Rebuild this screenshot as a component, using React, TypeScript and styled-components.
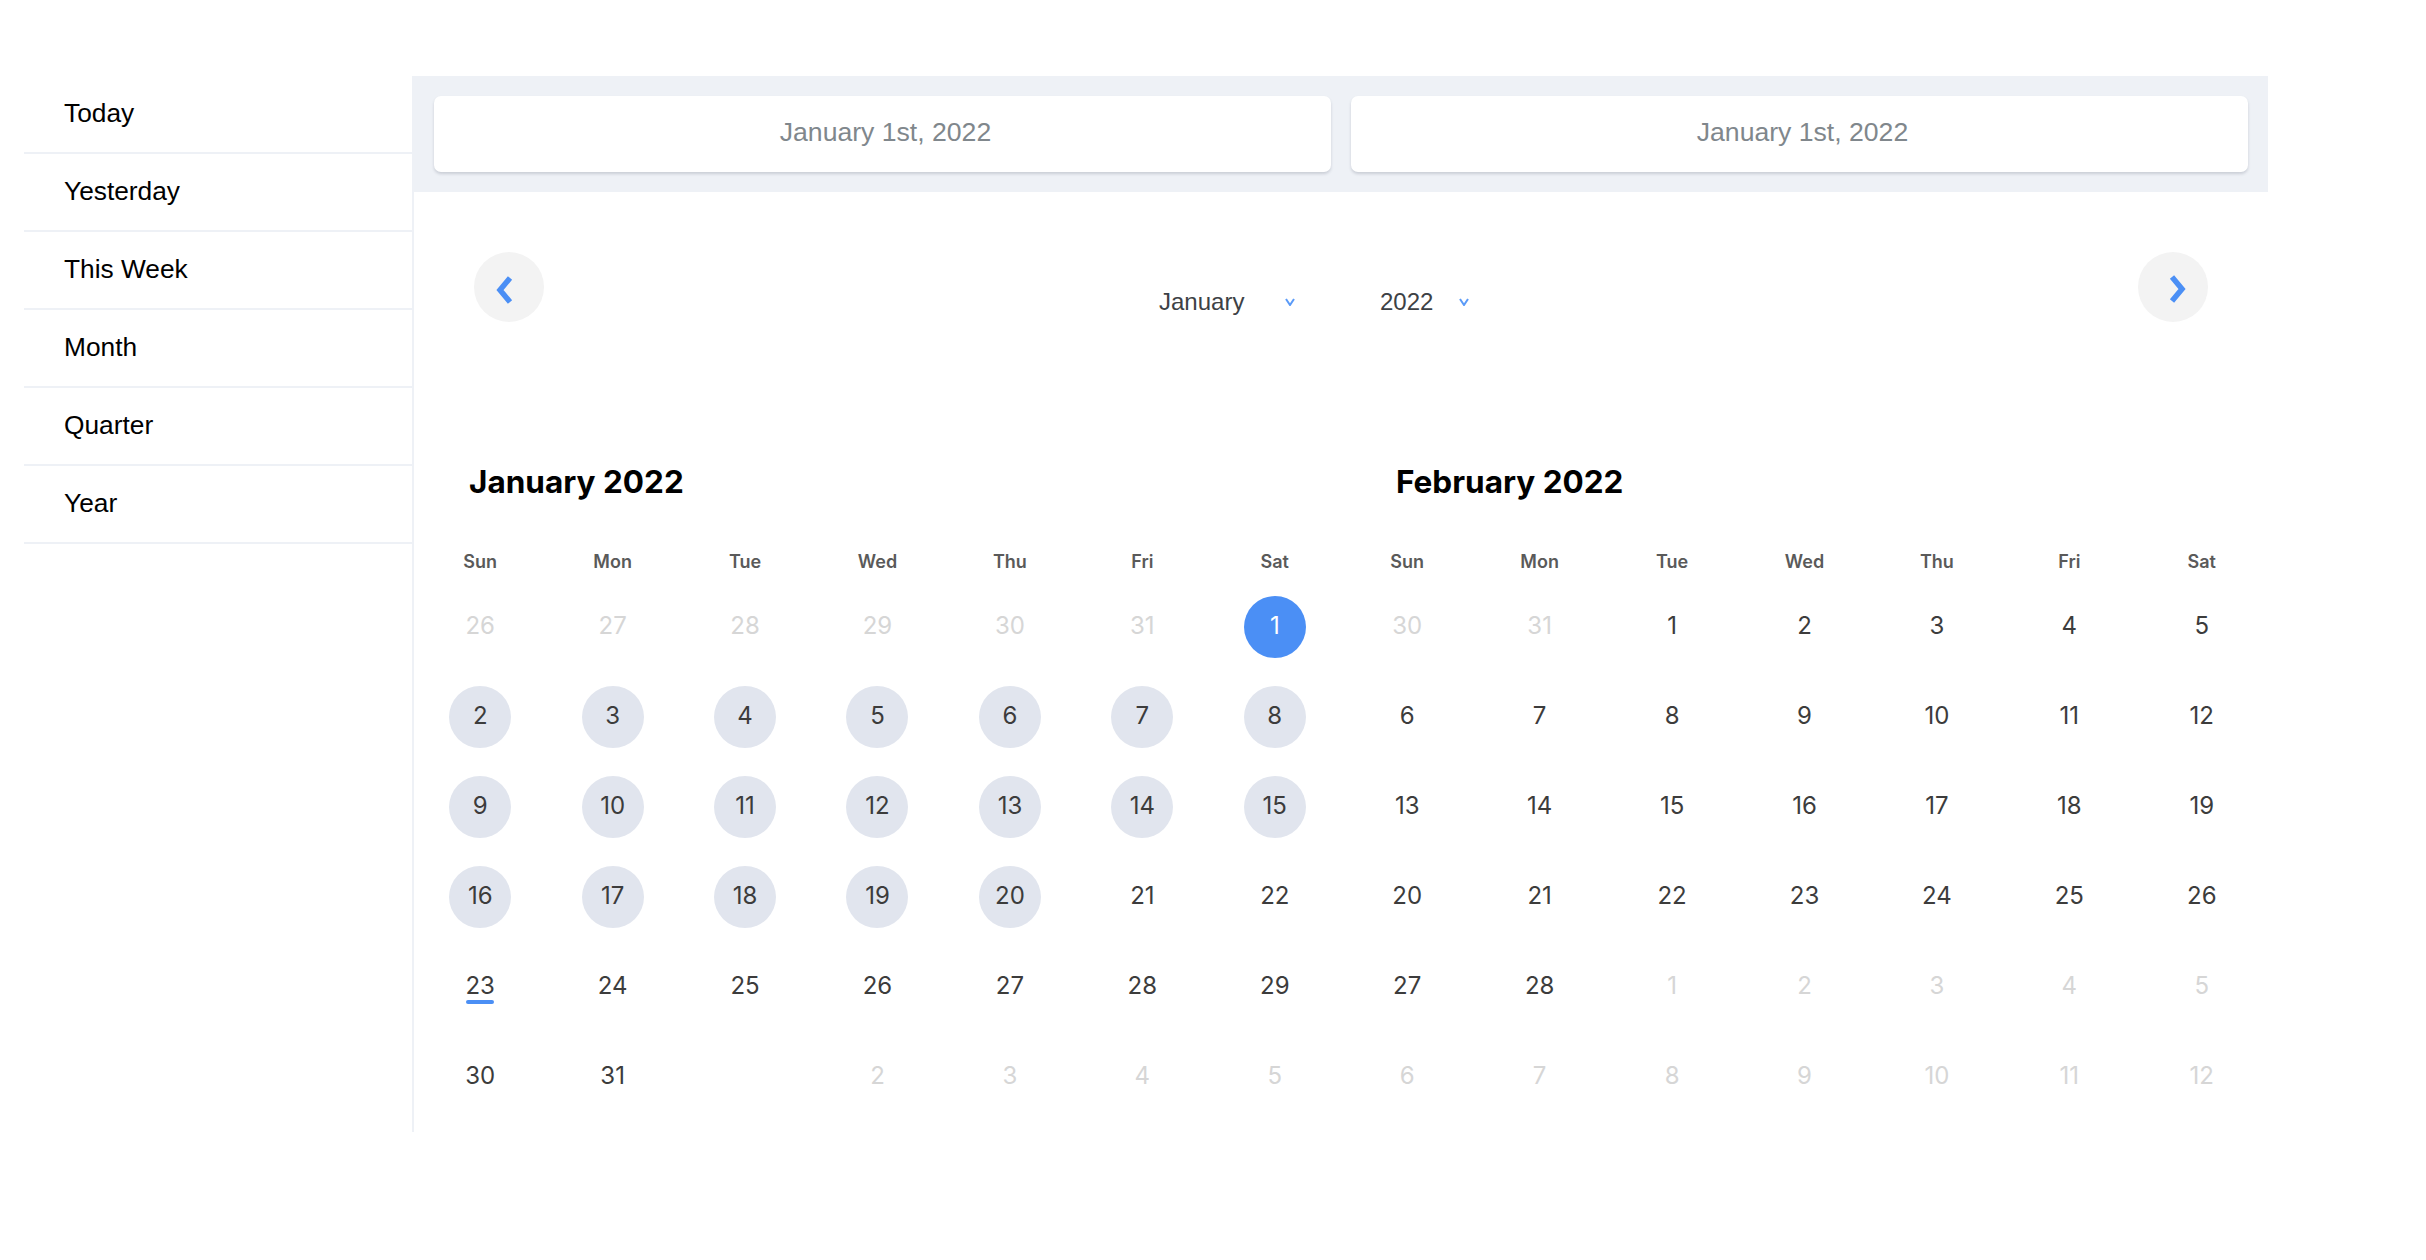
import React from 'react';
import styled, { createGlobalStyle } from 'styled-components';

const GlobalStyle = createGlobalStyle`
  html, body {
    margin: 0;
    padding: 0;
    background: #ffffff;
  }
  * {
    box-sizing: border-box;
  }
`;

const PANEL_GRAY = '#eef1f6';
const BLUE = '#4b8ff5';

type DayKind = 'in' | 'out' | 'blank';
type DayState = 'none' | 'start' | 'range' | 'today';

interface Day {
  n: number | null;
  kind: DayKind;
  state: DayState;
}

interface MonthData {
  title: string;
  weeks: Day[][];
}

const out = (n: number): Day => ({ n, kind: 'out', state: 'none' });
const day = (n: number, state: DayState = 'none'): Day => ({ n, kind: 'in', state });
const blank: Day = { n: null, kind: 'blank', state: 'none' };

const range = (from: number, to: number, make: (n: number) => Day) =>
  Array.from({ length: to - from + 1 }, (_, i) => make(from + i));

const january: MonthData = {
  title: 'January 2022',
  weeks: [
    [...range(26, 31, out), day(1, 'start')],
    range(2, 8, (n) => day(n, 'range')),
    range(9, 15, (n) => day(n, 'range')),
    [...range(16, 20, (n) => day(n, 'range')), day(21), day(22)],
    [day(23, 'today'), ...range(24, 29, (n) => day(n))],
    [day(30), day(31), blank, ...range(2, 5, out)],
  ],
};

const february: MonthData = {
  title: 'February 2022',
  weeks: [
    [out(30), out(31), ...range(1, 5, (n) => day(n))],
    range(6, 12, (n) => day(n)),
    range(13, 19, (n) => day(n)),
    range(20, 26, (n) => day(n)),
    [day(27), day(28), ...range(1, 5, out)],
    range(6, 12, out),
  ],
};

const presets = ['Today', 'Yesterday', 'This Week', 'Month', 'Quarter', 'Year'];
const weekdays = ['Sun', 'Mon', 'Tue', 'Wed', 'Thu', 'Fri', 'Sat'];

const Page = styled.div`
  display: flex;
  align-items: flex-start;
  padding: 76px 0 0 24px;
`;

const Sidebar = styled.nav`
  width: 388px;
  display: flex;
  flex-direction: column;
`;

const PresetItem = styled.div`
  height: 78px;
  display: flex;
  align-items: center;
  padding: 0 0 2px 40px;
  border-bottom: 2px solid ${PANEL_GRAY};
  font-family: 'Liberation Sans', Arial, sans-serif;
  font-size: 26.3px;
  color: #000;
  cursor: pointer;
`;

const Main = styled.section`
  width: 1856px;
  border-left: 2px solid ${PANEL_GRAY};
  padding-bottom: 10px;
`;

const InputsBar = styled.div`
  display: grid;
  grid-template-columns: 1fr 1fr;
  gap: 20px;
  padding: 20px;
  background: ${PANEL_GRAY};
`;

const DateInput = styled.div`
  height: 76px;
  display: flex;
  align-items: center;
  justify-content: center;
  padding: 0 0 3px 6px;
  background: #fff;
  border-radius: 7px;
  box-shadow: 0 2px 3px rgba(60, 70, 90, 0.2);
  font-family: 'Liberation Sans', Arial, sans-serif;
  font-size: 26.6px;
  color: #80878c;
`;

const NavRow = styled.div`
  display: flex;
  align-items: flex-start;
  padding: 60px 60px 0;
`;

const NavButton = styled.button<{ $dir: 'prev' | 'next' }>`
  width: 70px;
  height: 70px;
  flex: none;
  border: none;
  border-radius: 50%;
  background: #f3f3f3;
  display: flex;
  align-items: center;
  justify-content: center;
  padding: ${({ $dir }) => ($dir === 'prev' ? '6px 9px 0 0' : '4px 0 0 8px')};
  cursor: pointer;
`;

const Pickers = styled.div`
  flex: 1;
  display: flex;
  justify-content: center;
  gap: 85px;
  margin-top: 35px;
  padding-right: 54px;
`;

const Select = styled.div<{ $width: number }>`
  width: ${({ $width }) => $width}px;
  height: 30px;
  display: flex;
  align-items: center;
  justify-content: space-between;
  font-family: 'Liberation Sans', Arial, sans-serif;
  font-size: 24px;
  color: #3d4145;
  cursor: pointer;
`;

const Months = styled.div`
  display: grid;
  grid-template-columns: 1fr 1fr;
  margin-top: 142px;
`;

const MonthTitle = styled.h2`
  margin: 0 0 40px;
  padding-left: 55px;
  font-family: Inter, 'Liberation Sans', sans-serif;
  font-size: 31.5px;
  line-height: 36px;
  font-weight: 700;
  color: #000;
`;

const DayGrid = styled.div`
  display: grid;
  grid-template-columns: repeat(7, 1fr);
  grid-template-rows: 42px;
  grid-auto-rows: 90px;
`;

const WeekdayCell = styled.div`
  display: flex;
  align-items: center;
  justify-content: center;
  font-family: Inter, 'Liberation Sans', sans-serif;
  font-size: 18px;
  font-weight: 600;
  color: #5a5a5a;
`;

const DayCell = styled.div`
  display: flex;
  align-items: center;
  justify-content: center;
`;

const DayCircle = styled.div<{ $kind: DayKind; $state: DayState }>`
  position: relative;
  width: 62px;
  height: 62px;
  border-radius: 50%;
  display: flex;
  align-items: center;
  justify-content: center;
  padding-bottom: 3px;
  font-family: Inter, 'Liberation Sans', sans-serif;
  font-size: 24px;
  line-height: 24px;
  color: ${({ $kind, $state }) =>
    $state === 'start' ? '#fff' : $kind === 'out' ? '#d6d6d6' : '#3c3c3c'};
  background: ${({ $state }) =>
    $state === 'start' ? BLUE : $state === 'range' ? '#e1e5ee' : 'transparent'};
`;

const TodayMark = styled.span`
  position: relative;

  &::after {
    content: '';
    position: absolute;
    left: 50%;
    top: calc(100% + 2px);
    width: 28px;
    height: 4px;
    margin-left: -14px;
    border-radius: 2px;
    background: ${BLUE};
  }
`;

const Chevron = ({ dir }: { dir: 'prev' | 'next' }) => (
  <svg width="18" height="28" viewBox="0 0 18 28" aria-hidden="true">
    <polyline
      points={dir === 'prev' ? '14,2 4,14 14,26' : '4,2 14,14 4,26'}
      fill="none"
      stroke={BLUE}
      strokeWidth="5.5"
    />
  </svg>
);

const Caret = () => (
  <svg width="10" height="8" viewBox="0 0 10 8" aria-hidden="true">
    <polyline points="1,1 5,7 9,1" fill="none" stroke="#5b9bf8" strokeWidth="2" />
  </svg>
);

const Month = ({ data }: { data: MonthData }) => (
  <div>
    <MonthTitle>{data.title}</MonthTitle>
    <DayGrid>
      {weekdays.map((w) => (
        <WeekdayCell key={w}>{w}</WeekdayCell>
      ))}
      {data.weeks.flat().map((d, i) => (
        <DayCell key={i}>
          {d.n !== null && (
            <DayCircle $kind={d.kind} $state={d.state}>
              {d.state === 'today' ? <TodayMark>{d.n}</TodayMark> : d.n}
            </DayCircle>
          )}
        </DayCell>
      ))}
    </DayGrid>
  </div>
);

const App = () => {
  return (
    <>
      <GlobalStyle />
      <Page>
        <Sidebar>
          {presets.map((p) => (
            <PresetItem key={p}>{p}</PresetItem>
          ))}
        </Sidebar>
        <Main>
          <InputsBar>
            <DateInput>January 1st, 2022</DateInput>
            <DateInput>January 1st, 2022</DateInput>
          </InputsBar>
          <NavRow>
            <NavButton $dir="prev" aria-label="Previous month">
              <Chevron dir="prev" />
            </NavButton>
            <Pickers>
              <Select $width={136}>
                January
                <Caret />
              </Select>
              <Select $width={89}>
                2022
                <Caret />
              </Select>
            </Pickers>
            <NavButton $dir="next" aria-label="Next month">
              <Chevron dir="next" />
            </NavButton>
          </NavRow>
          <Months>
            <Month data={january} />
            <Month data={february} />
          </Months>
        </Main>
      </Page>
    </>
  );
};

export default App;
